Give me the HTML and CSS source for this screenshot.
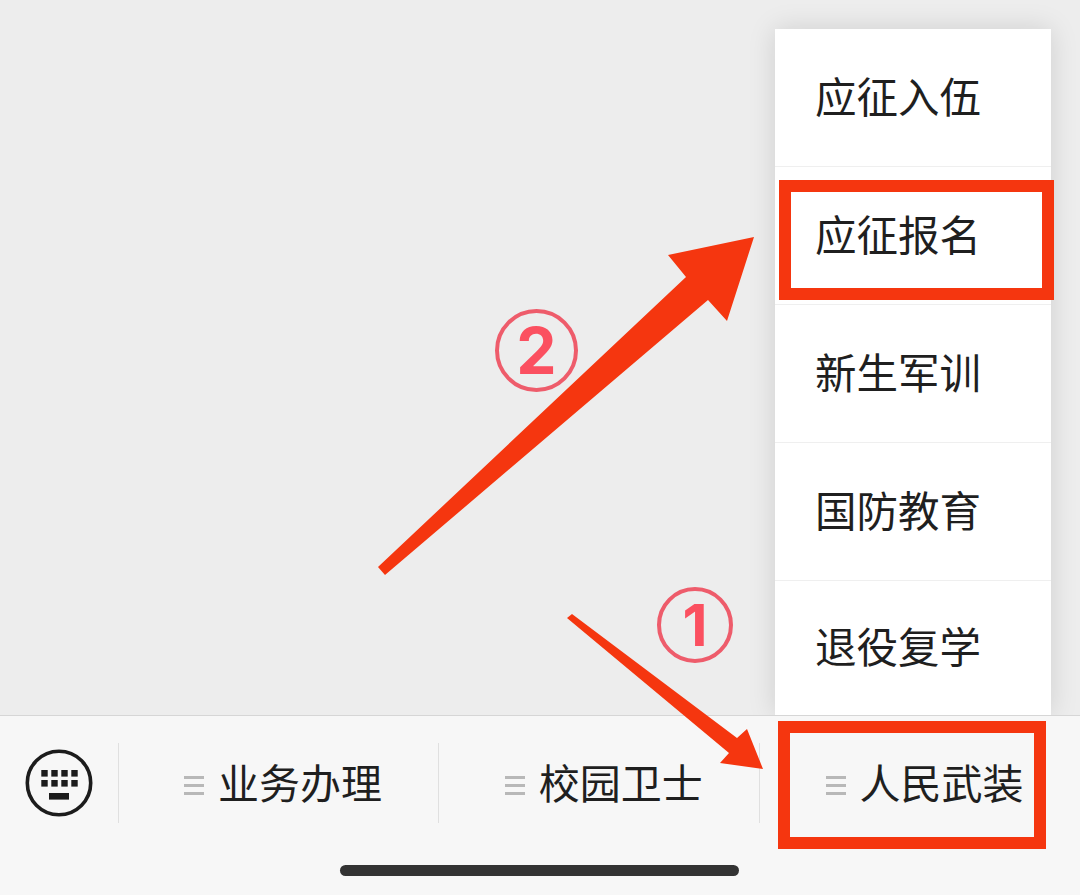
FILE: index.html
```html
<!DOCTYPE html>
<html lang="zh">
<head>
    <meta charset="utf-8">
    <title>人民武装</title>
    <link rel="stylesheet" href="styles.css">
</head>
<body>
    <div class="screen">
        <div class="chat-area">
            <ul class="popup-menu">
                <li class="menu-item">应征入伍</li>
                <li class="menu-item">应征报名</li>
                <li class="menu-item">新生军训</li>
                <li class="menu-item">国防教育</li>
                <li class="menu-item">退役复学</li>
            </ul>
        </div>

        <div class="bottom-bar">
            <div class="tab-row">
                <div class="keyboard-cell">
                    <svg class="keyboard-icon" width="68" height="68" viewBox="0 0 68 68">
                        <circle cx="34" cy="34" r="31.7" fill="none" stroke="#1c1c1c" stroke-width="3.6"/>
                        <g fill="#1c1c1c">
                            <rect x="16.3" y="21" width="6.4" height="6.6"/>
                            <rect x="26.3" y="21" width="6.4" height="6.6"/>
                            <rect x="36.3" y="21" width="6.4" height="6.6"/>
                            <rect x="46.3" y="21" width="6.4" height="6.6"/>
                            <rect x="16.3" y="31" width="6.4" height="6.6"/>
                            <rect x="26.3" y="31" width="6.4" height="6.6"/>
                            <rect x="36.3" y="31" width="6.4" height="6.6"/>
                            <rect x="46.3" y="31" width="6.4" height="6.6"/>
                            <rect x="24" y="44" width="20" height="6.6"/>
                        </g>
                    </svg>
                </div>
                <div class="tab"><span class="tab-lines"></span>业务办理</div>
                <div class="tab"><span class="tab-lines"></span>校园卫士</div>
                <div class="tab"><span class="tab-lines"></span>人民武装</div>
            </div>
            <div class="home-indicator"></div>
        </div>

        <!-- annotations drawn on top of the screenshot -->
        <div class="mark-box mark-box-top"></div>
        <div class="mark-box mark-box-bottom"></div>
        <div class="step-number step-one">1</div>
        <div class="step-number step-two">2</div>
        <svg class="arrows" width="1080" height="895" viewBox="0 0 1080 895">
            <polygon fill="#f5360f" points="378,567 385,575 708,300 727,321 754,237 668,255 686,277"/>
            <polygon fill="#f5360f" points="567,618 572,614 737,738 747,729 763,769 720,763 729,753"/>
        </svg>
    </div>
</body>
</html>
```

FILE: styles.css
```css
html, body { margin: 0; padding: 0; }
body { font-family: "Liberation Sans", "Noto Sans CJK SC", sans-serif; color: #1f1f1f; }

.screen { position: relative; width: 1080px; height: 895px; display: flex; flex-direction: column; overflow: hidden; background: #ededed; }

.chat-area { position: relative; height: 715px; overflow: hidden; }

.popup-menu { position: absolute; top: 29px; left: 775px; width: 276px; margin: 0; padding: 0; list-style: none; background: #fff; box-shadow: 0 0 26px rgba(0, 0, 0, 0.13); }
.menu-item { box-sizing: border-box; height: 138px; border-bottom: 1px solid #efefef; padding: 2px 0 0 40px; display: flex; align-items: center; font-size: 41.5px; line-height: 1; }
.menu-item:last-child { height: 134px; border-bottom: 0; }

.bottom-bar { flex: 1; background: #f7f7f7; border-top: 1px solid #d6d6d6; display: flex; flex-direction: column; }

.tab-row { display: flex; margin-top: 27px; height: 80px; }
.keyboard-cell { width: 117.6px; flex: none; display: flex; align-items: center; justify-content: center; }
.tab { flex: 1; box-sizing: border-box; padding: 4px 0 0 9px; display: flex; align-items: center; justify-content: center; gap: 14px; border-left: 1px solid #e0e0e0; font-size: 41px; line-height: 1; }
.tab-lines { width: 20px; height: 19px; flex: none; box-sizing: border-box; border-top: 3px solid #b8b8b8; border-bottom: 3px solid #b8b8b8; position: relative; }
.tab-lines::after { content: ""; position: absolute; left: 0; right: 0; top: 5px; height: 3px; background: #b8b8b8; }

.home-indicator { width: 399px; height: 11px; margin: 42px 0 0 340px; border-radius: 6px; background: #333; }

.mark-box { position: absolute; box-sizing: border-box; border: 12px solid #f5360f; }
.mark-box-top { left: 779px; top: 180px; width: 275px; height: 120px; }
.mark-box-bottom { left: 778px; top: 721px; width: 268px; height: 128px; }

.step-number { position: absolute; box-sizing: border-box; display: flex; align-items: center; justify-content: center; border-radius: 50%; border: 4px solid #ee5c6b; color: #fb5060; font-family: "Inter", sans-serif; font-weight: 700; line-height: 1; }
.step-one { left: 657px; top: 587px; width: 76px; height: 76px; font-size: 58px; }
.step-two { left: 495px; top: 309px; width: 83px; height: 83px; font-size: 64px; }

.arrows { position: absolute; top: 0; left: 0; }
```
